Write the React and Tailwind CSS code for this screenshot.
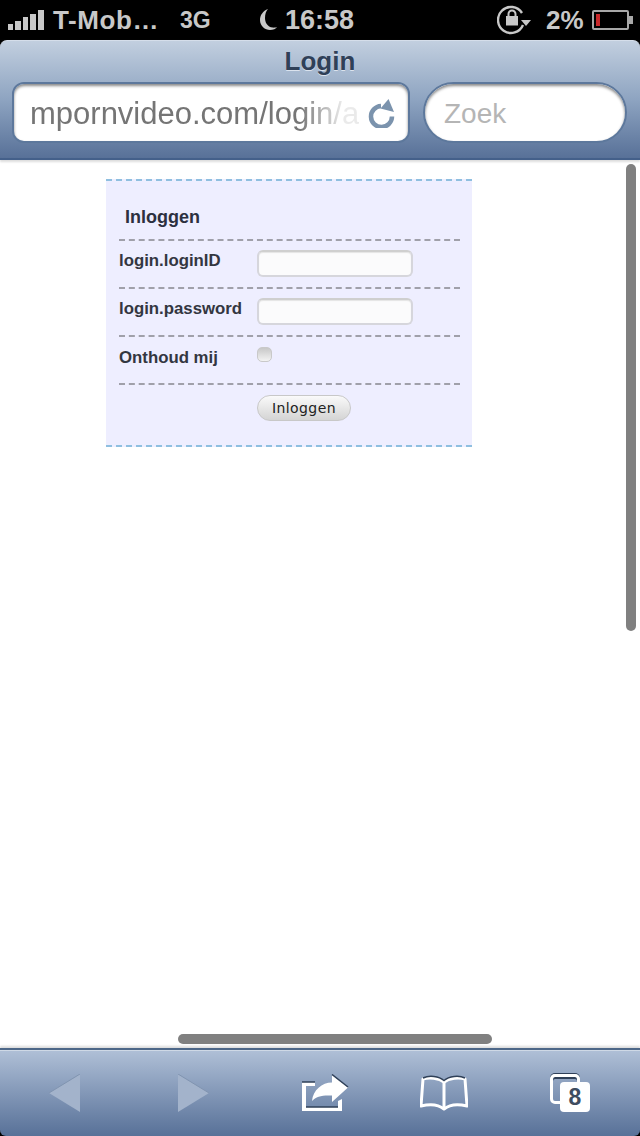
const ui = "font-['Liberation_Sans','Arial',sans-serif]";

function SignalBars() {
  return (
    <div className="flex items-end gap-[2px] h-[20px] w-[38px]">
      <div className="w-[5px] h-[6px] bg-[#c8c8c8]"></div>
      <div className="w-[6px] h-[9px] bg-[#c8c8c8]"></div>
      <div className="w-[5px] h-[13px] bg-[#c8c8c8]"></div>
      <div className="w-[6px] h-[16px] bg-[#c8c8c8]"></div>
      <div className="w-[6px] h-[20px] bg-[#c8c8c8]"></div>
    </div>
  );
}

function StatusBar() {
  return (
    <div className={`flex items-center h-[40px] bg-black text-[#c8c8c8] font-bold ${ui}`}>
      <div className="ml-[8px]"><SignalBars /></div>
      <span className="ml-[7px] w-[127px] text-[26px] tracking-[0.6px] whitespace-nowrap">T-Mob…</span>
      <span className="w-[76px] text-[23px]">3G</span>
      <svg width="22" height="24" viewBox="0 0 22 24">
        <path d="M12 1C7 3 4 7 4 12c0 6 5 10 10 10 3 0 6-1 7-3-1 .5-3 .8-4 .6C11 19 9 14 9 10c0-4 1-7 3-9z" fill="#c8c8c8" />
      </svg>
      <span className="ml-[7px] w-[212px] text-[27px]">16:58</span>
      <svg width="36" height="32" viewBox="0 0 36 32">
        <path d="M26 21A13 13 0 1 1 25 9" fill="none" stroke="#c8c8c8" strokeWidth="2.4" />
        <path d="M24 16h10l-5 6z" fill="#c8c8c8" />
        <rect x="9" y="12" width="12" height="9.500" fill="#c8c8c8" />
        <path d="M11.500 12v-2a3.500 3.500 0 0 1 7 0v2" fill="none" stroke="#c8c8c8" strokeWidth="2" />
      </svg>
      <span className="ml-[13px] w-[46px] text-[26px] whitespace-nowrap">2%</span>
      <div className="flex items-center">
        <div className="flex items-center w-[37px] h-[20px] border-2 border-[#a8a8a8] rounded-[2px] pl-[2px]">
          <div className="w-[4px] h-[12px] bg-[#c8282a]"></div>
        </div>
        <div className="w-[4px] h-[8px] bg-[#a8a8a8]"></div>
      </div>
    </div>
  );
}

function ReloadIcon() {
  return (
    <svg width="30" height="30" viewBox="0 0 30 30">
      <path d="M25 18.500A10.500 10.500 0 1 1 14 8" fill="none" stroke="#7b93ad" strokeWidth="4.500" />
      <path d="M21.500 1l5.500 13L13.500 10.500z" fill="#7b93ad" />
    </svg>
  );
}

function NavBar() {
  return (
    <div className="relative z-10 bg-black shadow-[0_2px_2px_#dddddd]">
      <div className={`h-[120px] rounded-t-[7px] border-t border-[#d5deea] border-b-2 border-b-[#44608a] bg-gradient-to-b from-[#c2cfdf] via-[#8ea4c1] to-[#587198] ${ui}`}>
        <div className="h-[40px] flex items-center justify-center text-[26px] font-bold text-[#2f4058] [text-shadow:0_1px_0_#dbe3ee]">Login</div>
        <div className="flex gap-[13px] pl-[12px] pt-[1px]">
          <div className="flex items-center w-[398px] h-[61px] bg-white rounded-[12px] border-2 border-[#5d789c] shadow-[inset_0_2px_3px_#8a8a8a] pl-[16px] pr-[11px] overflow-hidden">
            <span className="flex-1 pt-[3px] overflow-hidden whitespace-nowrap text-[31px] text-[#757575] [mask-image:linear-gradient(to_right,black_82%,rgba(0,0,0,0.15)_95%)]">mpornvideo.com/login/a</span>
            <div className="ml-[8px]"><ReloadIcon /></div>
          </div>
          <div className="flex items-center w-[204px] h-[61px] bg-white rounded-full border-2 border-[#5d789c] shadow-[inset_0_2px_3px_#8a8a8a] pl-[19px]">
            <span className="pt-[3px] text-[28px] text-[#b5b5b5]">Zoek</span>
          </div>
        </div>
      </div>
    </div>
  );
}

function FormRow({ label, labelTop, children }) {
  return (
    <div className="flex h-[48px] border-t-2 border-dashed border-[#a0a0aa]">
      <div className={`w-[138px] ${labelTop} text-[16.800px] font-bold leading-[24px] text-[#333641] whitespace-nowrap`}>{label}</div>
      {children}
    </div>
  );
}

function TextInput() {
  return (
    <div className="mt-[9px] w-[156px] h-[27px] rounded-[6px] border-2 border-[#d6d6dc] border-t-[#cfcfcf] bg-[#fbfbfc] shadow-[inset_0_1px_1px_#e4e4e4]"></div>
  );
}

function LoginBox() {
  return (
    <div className={`ml-[106px] w-[366px] h-[268px] mt-[19px] border-y-2 border-dashed border-[#8fbfe0] bg-[#eeeeff] pl-[13px] pr-[12px] ${ui}`}>
      <div className="h-[58px] pt-[24px] pl-[6px] text-[18px] leading-[24px] font-bold text-[#2c3040]">Inloggen</div>
      <FormRow label="login.loginID" labelTop="pt-[8px]"><TextInput /></FormRow>
      <FormRow label="login.password" labelTop="pt-[8px]"><TextInput /></FormRow>
      <FormRow label="Onthoud mij" labelTop="pt-[9px]">
        <div className="mt-[10px] w-[15px] h-[15px] rounded-[5px] border border-[#c9c9c9] bg-gradient-to-b from-[#c8c8c8] to-[#f3f3f3]"></div>
      </FormRow>
      <div className="h-[60px] border-t-2 border-dashed border-[#a0a0aa]">
        <div className="ml-[138px] mt-[10px] w-[94px] h-[26px] flex items-center justify-center rounded-full border border-[#c8c8c8] bg-gradient-to-b from-[#fafafa] to-[#d4d4d4] text-[#222222] text-[14px] tracking-[0.4px] font-['DejaVu_Sans',sans-serif]">Inloggen</div>
      </div>
    </div>
  );
}

function ToolbarIcons() {
  return (
    <>
      <svg width="31" height="38" viewBox="0 0 31 38">
        <path d="M31 0v38L0 19z" fill="#a3b3cb" />
        <path d="M31 0L0 19" stroke="#8094b0" strokeWidth="1" />
      </svg>
      <svg className="ml-[98px]" width="31" height="38" viewBox="0 0 31 38">
        <path d="M0 0v38l31-19z" fill="#a3b3cb" />
        <path d="M0 0l31 19" stroke="#8094b0" strokeWidth="1" />
      </svg>
      <svg className="ml-[92px]" width="48" height="38" viewBox="0 0 48 38">
        <path d="M1 8h13v4H5v21h32v-6l4-2v12H1z" fill="#fff" />
        <path d="M1 8h13M5 33h32" stroke="#2f4058" strokeWidth="1.500" />
        <path d="M31 1l16 12.500L31 28v-6.500c-9-.5-16 .5-20 5.500 1-11 10-18.500 20-18.500z" fill="#fff" />
        <path d="M31 .5L47 13" stroke="#2f4058" strokeWidth="1.500" />
      </svg>
      <svg className="ml-[71px]" width="48" height="36" viewBox="0 0 48 36">
        <path d="M24 7C19 3 9 2 3 4L1 31c8-2 17-2 23 3 6-5 15-5 23-3L45 4c-6-2-16-1-21 3z" fill="none" stroke="#fff" strokeWidth="3" strokeLinejoin="round" />
        <path d="M24 7v26" stroke="#fff" strokeWidth="3" />
        <path d="M3 3C9 0 19 1 24 5.500 29 1 39 0 45 3" fill="none" stroke="#2f4058" strokeWidth="1.500" />
      </svg>
      <div className="relative ml-[82px] w-[40px] h-[38px]">
        <div className="absolute left-0 top-0 w-[30px] h-[30px] rounded-[5px] border-[3px] border-white shadow-[inset_0_2px_0_#2f4058,0_-1px_0_#2f4058]"></div>
        <div className="absolute left-[10px] top-[8px] w-[30px] h-[30px] rounded-[4px] bg-white flex items-center justify-center text-[23px] font-bold text-[#3f4d60]">8</div>
      </div>
    </>
  );
}

export default function App() {
  return (
    <div className="relative w-[640px] h-[1136px] overflow-hidden bg-white flex flex-col">
      <StatusBar />
      <NavBar />
      <div className="flex-1">
        <LoginBox />
      </div>
      <div className="bg-black shadow-[0_-2px_2px_#dddddd]">
        <div className={`h-[88px] flex items-center pl-[49px] rounded-b-[6px] border-t-2 border-t-[#4d6788] shadow-[inset_0_1px_0_#cfd9e6] bg-gradient-to-b from-[#b0c0d7] to-[#587198] ${ui}`}>
          <ToolbarIcons />
        </div>
      </div>
      {/* scroll indicators */}
      <div className="absolute left-[626px] top-[164px] w-[10px] h-[467px] rounded-full bg-[#808080]"></div>
      <div className="absolute left-[178px] top-[1034px] w-[314px] h-[10px] rounded-full bg-[#808080]"></div>
    </div>
  );
}
